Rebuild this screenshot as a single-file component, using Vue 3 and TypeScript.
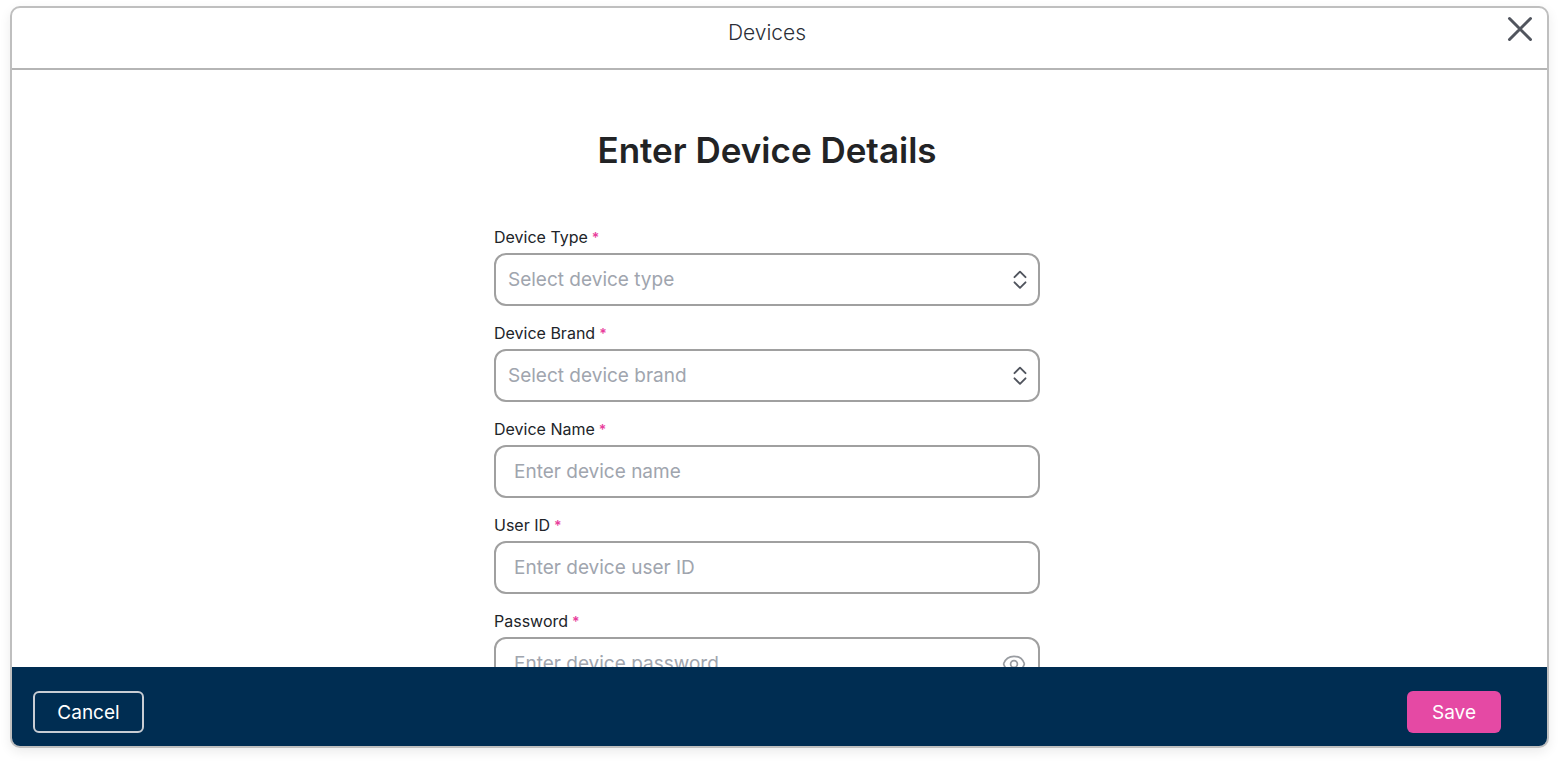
<script setup lang="ts">
import { reactive, ref } from 'vue'

interface Field {
  id: 'type' | 'brand' | 'name' | 'user' | 'password'
  label: string
  placeholder: string
  kind: 'select' | 'text' | 'password'
  options?: string[]
}

const fields: Field[] = [
  { id: 'type', label: 'Device Type', placeholder: 'Select device type', kind: 'select', options: [] },
  { id: 'brand', label: 'Device Brand', placeholder: 'Select device brand', kind: 'select', options: [] },
  { id: 'name', label: 'Device Name', placeholder: 'Enter device name', kind: 'text' },
  { id: 'user', label: 'User ID', placeholder: 'Enter device user ID', kind: 'text' },
  { id: 'password', label: 'Password', placeholder: 'Enter device password', kind: 'password' },
]

const values = reactive<Record<Field['id'], string>>({ type: '', brand: '', name: '', user: '', password: '' })
const showPassword = ref(false)

function inputType(field: Field): string {
  return field.kind === 'password' && !showPassword.value ? 'password' : 'text'
}
</script>

<template>
  <div class="page">
    <section class="dialog" role="dialog" aria-labelledby="dialog-title">
      <header class="header">
        <h1 id="dialog-title" class="header-title">Devices</h1>
        <button class="close" type="button" aria-label="Close">
          <svg width="26" height="26" viewBox="0 0 26 26" fill="none" stroke="currentColor" stroke-width="3" stroke-linecap="round">
            <path d="M2.500 2.500 23.500 23.500M23.500 2.500 2.500 23.500" />
          </svg>
        </button>
      </header>

      <main class="body">
        <h2 class="title">Enter Device Details</h2>
        <form id="device-form" class="form" @submit.prevent>
          <div v-for="field in fields" :key="field.id" class="field">
            <label class="label" :for="field.id">{{ field.label }}<span class="star">*</span></label>
            <div class="control">
              <template v-if="field.kind === 'select'">
                <select :id="field.id" v-model="values[field.id]" class="box select" :class="{ empty: !values[field.id] }">
                  <option value="" disabled>{{ field.placeholder }}</option>
                  <option v-for="option in field.options" :key="option">{{ option }}</option>
                </select>
                <svg class="chevrons" width="16" height="20" viewBox="0 0 16 20" fill="none" stroke="currentColor" stroke-width="1.9" stroke-linecap="round" stroke-linejoin="round">
                  <path d="M2.5 7.200 8 1.700l5.500 5.500M2.500 12.300 8 17.800l5.500-5.500" />
                </svg>
              </template>
              <input v-else :id="field.id" v-model="values[field.id]" class="box" :type="inputType(field)" :placeholder="field.placeholder" />
              <button v-if="field.kind === 'password'" class="reveal" type="button" aria-label="Show password" @click="showPassword = !showPassword">
                <svg width="24" height="18" viewBox="0 0 24 18" fill="none" stroke="currentColor" stroke-width="1.7" stroke-linecap="round" stroke-linejoin="round">
                  <path d="M1.700 9.300a1 1 0 0 1 0-.7C3.200 4.200 7.200 1.300 12 1.300s8.800 2.900 10.300 7.300a1 1 0 0 1 0 .7C20.800 13.700 16.800 16.600 12 16.600S3.200 13.700 1.700 9.300Z" />
                  <circle cx="12" cy="9" r="3.400" />
                </svg>
              </button>
            </div>
          </div>
        </form>
      </main>

      <footer class="footer">
        <button class="button cancel" type="button">Cancel</button>
        <button class="button save" type="submit" form="device-form">Save</button>
      </footer>
    </section>
  </div>
</template>

<style>
body {
  margin: 0;
  background: #fff;
}
</style>

<style scoped>
*,
*::before,
*::after {
  box-sizing: border-box;
}

.page {
  height: 100vh;
  padding: 6px 10px 15px;
  font-family: Inter, "Liberation Sans", sans-serif;
  color: #212429;
}

button,
input,
select {
  font-family: inherit;
}

.dialog {
  display: flex;
  flex-direction: column;
  height: 100%;
  overflow: hidden;
  border: 2px solid #bfbfbf;
  border-radius: 10px;
  background: #fff;
  box-shadow: 0 4px 12px rgba(0, 0, 0, 0.08);
}

.header {
  display: grid;
  grid-template-columns: 40px 1fr 65px;
  flex: none;
  height: 62px;
  border-bottom: 2px solid #b5b5b5;
}

.header-title {
  grid-column: 2;
  margin: 0;
  font-size: 21px;
  font-weight: 300;
  line-height: 50px;
  text-align: center;
  color: #2b2f38;
}

.close {
  display: flex;
  align-items: center;
  justify-content: center;
  justify-self: end;
  width: 54px;
  height: 42px;
  padding: 0;
  border: 0;
  background: none;
  color: #51555e;
}

.body {
  flex: 1;
  min-height: 0;
  overflow: auto;
  padding: 58px 25px 24px 0;
  scrollbar-width: none;
}

.title {
  margin: 0 0 53px;
  font-size: 35px;
  font-weight: 600;
  line-height: 44px;
  text-align: center;
  color: #222325;
}

.form {
  display: flex;
  flex-direction: column;
  gap: 15px;
  max-width: 546px;
  margin: 0 auto;
}

.field {
  display: flex;
  flex-direction: column;
  gap: 4px;
}

.label {
  font-size: 16px;
  line-height: 24px;
}

.star {
  margin-left: 4px;
  font-size: 14px;
  font-weight: 600;
  line-height: 1;
  color: #e83e9c;
}

.control {
  position: relative;
}

.box {
  display: block;
  width: 100%;
  height: 53px;
  padding: 0 56px 0 18px;
  border: 2px solid #a0a0a0;
  border-radius: 12px;
  background: #fff;
  font-size: 19px;
  color: #212429;
}

.box::placeholder {
  color: #a0a5ae;
  opacity: 1;
}

.select {
  appearance: none;
  padding-left: 12px;
}

.select.empty {
  color: #a0a5ae;
}

.chevrons {
  position: absolute;
  top: 17px;
  right: 12px;
  color: #50545d;
  pointer-events: none;
}

.reveal {
  position: absolute;
  top: 18px;
  right: 14px;
  display: flex;
  padding: 0;
  border: 0;
  background: none;
  color: #999ca1;
}

.footer {
  display: flex;
  align-items: flex-start;
  justify-content: space-between;
  flex: none;
  height: 79px;
  padding: 24px 46px 0 21px;
  background: #002d52;
}

.button {
  height: 42px;
  padding: 0;
  border-radius: 6px;
  font-size: 19px;
  color: #fff;
}

.cancel {
  width: 111px;
  border: 2px solid #c8cdd4;
  background: transparent;
}

.save {
  width: 94px;
  border: 0;
  background: #e549a4;
}
</style>
